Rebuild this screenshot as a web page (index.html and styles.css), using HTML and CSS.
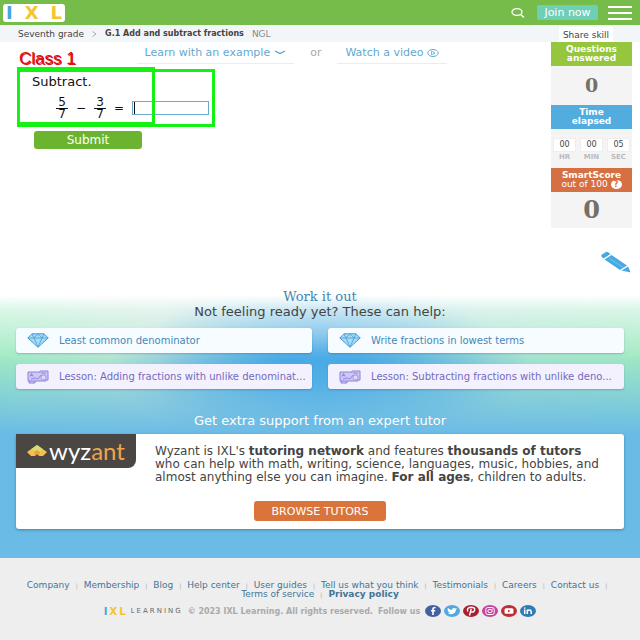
FILE: index.html
```html
<!DOCTYPE html>
<html lang="en">
<head>
<meta charset="utf-8">
<title>IXL | Add and subtract fractions</title>
<link rel="stylesheet" href="styles.css">
</head>
<body>
<svg class="defs" width="0" height="0" aria-hidden="true">
  <symbol id="gem" viewBox="0 0 22 15">
    <path d="M5 .8h12l4.2 4.2L11 14.2.8 5z" fill="#a4dcf8" stroke="#4a9bd2"/>
    <path d="M.8 5h20.4M5 .8 7 5l4-4.2L15 5l2-4.2M7 5l4 9.2L15 5" fill="none" stroke="#4a9bd2" stroke-width=".8"/>
  </symbol>
  <symbol id="lesson" viewBox="0 0 22 14">
    <path d="M1 2h12V1h8v9h-2v1H8v2H2v-2H1z" fill="#cdc7f5" stroke="#8e84dc"/>
    <path d="M3 6.500 4.500 3.500 6 6.500M3.500 5.500h2M4 9l4-1 3 1 3-4M14 3h5M2 11h6" fill="none" stroke="#8579d8" stroke-width=".8"/>
    <circle cx="16.500" cy="7.500" r="2.600" fill="#ddd9fa" stroke="#8e84dc" stroke-width=".8"/>
  </symbol>
</svg>

<header class="topbar">
  <a class="logo" href="#" aria-label="IXL"><span class="blue">I</span><span>X</span><span>L</span></a>
  <nav class="actions">
    <button class="plain" aria-label="Search"><svg width="14" height="10" viewBox="0 0 14 10"><ellipse cx="6" cy="4" rx="5" ry="3.300" fill="none" stroke="#fff" stroke-width="1.300"/><path d="m9.500 6.500 3.500 2.800" stroke="#fff" stroke-width="1.500"/></svg></button>
    <button class="join">Join now</button>
    <button class="plain" aria-label="Menu"><svg width="24" height="14" viewBox="0 0 24 14"><path d="M0 1h24M0 7h24M0 13h24" stroke="#fff" stroke-width="2"/></svg></button>
  </nav>
</header>

<nav class="crumbs">
  <a href="#">Seventh grade</a>
  <svg width="5" height="6" viewBox="0 0 5 6"><path d="m.5.500 3.500 2.500-3.500 2.500" fill="none" stroke="#aaa"/></svg>
  <strong>G.1 Add and subtract fractions</strong>
  <span class="code">NGL</span>
  <button class="share">Share skill</button>
</nav>

<main class="practice">
  <section class="work">
    <div class="helpers">
      <a href="#">Learn with an example <svg width="12" height="5" viewBox="0 0 12 5"><path d="m1 1 5 2.500L11 1" fill="none" stroke="#5b9fc8" stroke-width="1.200"/></svg></a>
      <span>or</span>
      <a href="#">Watch a video <svg width="12" height="8" viewBox="0 0 12 8"><ellipse cx="6" cy="4" rx="5.200" ry="3.500" fill="none" stroke="#5fa9d2"/><path d="M4.500 2.200v3.600L8 4z" fill="none" stroke="#5fa9d2" stroke-width=".8"/></svg></a>
    </div>
    <form class="question">
      <label class="prompt" for="answer">Subtract.</label>
      <div class="equation">
        <span class="fraction"><span>5</span><span>7</span></span>
        <span>−</span>
        <span class="fraction"><span>3</span><span>7</span></span>
        <span>=</span>
        <input id="answer" type="text">
      </div>
      <button class="submit" type="button">Submit</button>
      <div class="box box-wide"></div>
      <div class="box box-narrow"></div>
      <span class="tag tag-back" aria-hidden="true">Class 1</span>
      <span class="tag">Class 1</span>
    </form>
  </section>
  <aside class="stats">
    <h2 class="green">Questions<br>answered</h2>
    <p class="count">0</p>
    <h2 class="sky">Time<br>elapsed</h2>
    <div class="timer">
      <div><b>00</b><small>HR</small></div>
      <div><b>00</b><small>MIN</small></div>
      <div><b>05</b><small>SEC</small></div>
    </div>
    <h2 class="rust">SmartScore<br><span>out of 100 <i>?</i></span></h2>
    <p class="count score">0</p>
    <button class="plain pencil" aria-label="Scratchpad"><svg width="32" height="22" viewBox="0 0 32 22"><path d="m6 1-4 2.500q-1.500 1 0 2.500L3.500 7.500 10.500 3 8.500 1.500Q7 .300 6 1zM11.500 4 4.500 8.500 20 19l7-4.500zM28 15.500 21.500 19.600l8 1.600q1 .100.700-.900z" fill="#48a9e3"/><path d="m9 7 14 9.500" stroke="#7fc6ef" stroke-width=".8"/></svg></button>
  </aside>
</main>

<section class="support">
  <h2 class="title">Work it out</h2>
  <p class="lead">Not feeling ready yet? These can help:</p>
  <div class="cards">
    <a class="card" href="#"><svg width="22" height="15"><use href="#gem"/></svg><span>Least common denominator</span></a>
    <a class="card" href="#"><svg width="22" height="15"><use href="#gem"/></svg><span>Write fractions in lowest terms</span></a>
    <a class="card lesson" href="#"><svg width="22" height="14"><use href="#lesson"/></svg><span>Lesson: Adding fractions with unlike denominat...</span></a>
    <a class="card lesson" href="#"><svg width="22" height="14"><use href="#lesson"/></svg><span>Lesson: Subtracting fractions with unlike deno...</span></a>
  </div>
  <h3 class="expert">Get extra support from an expert tutor</h3>
  <div class="tutor">
    <div class="wyzant">
      <svg width="20" height="12" viewBox="0 0 20 12"><path d="M10 0 0 7l4 4 3.500 0L10 9l2.500 2H16l4-4z" fill="#f4c24b"/><path d="M10 0 4 4.300 10 8l6-3.700z" fill="#d6dc70"/><path d="m7 7 3-2 3 2-1 4-2-2-2 2z" fill="#ef9f3e"/></svg>
      <span>wyz<em>ant</em></span>
    </div>
    <div class="pitch">
      <p>Wyzant is IXL's <b>tutoring network</b> and features <b>thousands of tutors</b> who can help with math, writing, science, languages, music, hobbies, and almost anything else you can imagine. <b>For all ages</b>, children to adults.</p>
    </div>
    <button class="browse">BROWSE TUTORS</button>
  </div>
</section>

<footer class="footer">
  <ul>
    <li><a href="#">Company</a></li>
    <li><a href="#">Membership</a></li>
    <li><a href="#">Blog</a></li>
    <li><a href="#">Help center</a></li>
    <li><a href="#">User guides</a></li>
    <li><a href="#">Tell us what you think</a></li>
    <li><a href="#">Testimonials</a></li>
    <li><a href="#">Careers</a></li>
    <li><a href="#">Contact us</a></li>
    <li><a href="#">Terms of service</a></li>
    <li><a href="#"><b>Privacy policy</b></a></li>
  </ul>
  <div class="legal">
    <span class="mini"><span class="blue">I</span><span>X</span><span>L</span></span>
    <span class="learning">LEARNING</span>
    <span class="copy">© 2023 IXL Learning. All rights reserved.</span>
    <span class="follow">Follow us</span>
    <div class="social">
      <a href="#" aria-label="Facebook"><svg width="16" height="12" viewBox="0 0 16 12"><ellipse cx="8" cy="6" rx="8" ry="6" fill="#4460a0"/><path d="M8 10V4q0-1.500 2.500-1.500M6 5.700h4.200" fill="none" stroke="#fff" stroke-width="1.600"/></svg></a>
      <a href="#" aria-label="Twitter"><svg width="16" height="12" viewBox="0 0 16 12"><ellipse cx="8" cy="6" rx="8" ry="6" fill="#51a8e2"/><path d="M4 3q2 2 4 2 0-2 2-2 1 0 1.500.600L13 3.300l-1 1.500Q11.500 9 7 9.200q-2 0-3.300-.8 1.500 0 2.300-.6Q4 7 4 6 3 4.500 4 3z" fill="#fff"/></svg></a>
      <a href="#" aria-label="Pinterest"><svg width="16" height="12" viewBox="0 0 16 12"><ellipse cx="8" cy="6" rx="8" ry="6" fill="#a91f32"/><path d="M4.700 6.500Q3.500 2.300 8 2.200q4.200.1 3.700 2.600Q11 7.600 8 7M8.200 4 6.500 10.500" fill="none" stroke="#fff" stroke-width="1.400"/></svg></a>
      <a href="#" aria-label="Instagram"><svg width="16" height="12" viewBox="0 0 16 12"><ellipse cx="8" cy="6" rx="8" ry="6" fill="#c444a0"/><rect x="3.800" y="2.500" width="8.400" height="7" rx="2" fill="none" stroke="#fff"/><ellipse cx="8" cy="6" rx="2.200" ry="1.700" fill="none" stroke="#fff"/><circle cx="10.500" cy="4" r=".5" fill="#fff"/></svg></a>
      <a href="#" aria-label="YouTube"><svg width="16" height="12" viewBox="0 0 16 12"><ellipse cx="8" cy="6" rx="8" ry="6" fill="#bd2f36"/><rect x="3.500" y="3.200" width="9" height="5.600" rx="1.500" fill="#fff"/><path d="M7 4.700v2.600L9.500 6z" fill="#bd2f36"/></svg></a>
      <a href="#" aria-label="LinkedIn"><svg width="16" height="12" viewBox="0 0 16 12"><ellipse cx="8" cy="6" rx="8" ry="6" fill="#2f7bb5"/><path d="M4.700 4.600V9M4.700 2.500v1.200M7.300 9V4.600M7.300 6.500q.2-1.500 2-1.500t1.900 1.500V9" fill="none" stroke="#fff" stroke-width="1.500"/></svg></a>
    </div>
  </div>
</footer>
</body>
</html>
```

FILE: styles.css
```css
* { box-sizing: border-box; }

body {
  margin: 0;
  min-height: 100vh;
  display: flex;
  flex-direction: column;
  background: #fff;
  color: #444;
  font-family: "DejaVu Sans", Verdana, sans-serif;
  font-size: 12px;
}

h2, h3, p, ul { margin: 0; padding: 0; font-weight: normal; }
a { color: inherit; text-decoration: none; }
button { font-family: inherit; border: 0; padding: 0; }
svg { display: block; flex: none; }
.defs { position: absolute; }
.plain { background: none; }

.topbar {
  display: flex;
  justify-content: space-between;
  align-items: center;
  height: 25px;
  padding: 0 8px 0 3px;
  background: #76bc4b;
}
.logo {
  display: flex;
  justify-content: space-between;
  align-items: center;
  width: 62px;
  height: 18px;
  padding: 0 3px;
  border-radius: 3px;
  background: #fff;
  color: #f5c431;
  font-size: 18px;
  line-height: 18px;
  font-weight: bold;
}
.blue { color: #48a5e0; }
.actions { display: flex; align-items: center; gap: 12px; }
.join {
  width: 61px;
  height: 15px;
  margin-right: -2px;
  border-radius: 2px;
  background: #6fcfb4;
  color: #fff;
  font-size: 11px;
  line-height: 15px;
}

.crumbs {
  display: flex;
  align-items: center;
  gap: 8px;
  height: 17px;
  padding: 0 27px 0 18px;
  background: #f3f6f9;
  font-size: 9px;
}
.crumbs strong { font-size: 8px; }
.code { color: #888; }
.share {
  align-self: flex-end;
  width: 54px;
  height: 15px;
  margin-left: auto;
  background: #fff;
  color: #444;
  font-size: 9px;
}

.practice { display: flex; }
.work { flex: 1; }
.helpers {
  display: flex;
  justify-content: center;
  gap: 16px;
  padding-left: 33px;
  color: #5fa9d2;
  font-size: 11px;
  line-height: 21px;
}
.helpers a {
  display: flex;
  align-items: center;
  gap: 4px;
  padding: 0 8px;
  border-bottom: 1px solid #e3eef5;
}
.helpers span { color: #aaa; }

.question { position: relative; padding: 11px 18px 0 32px; color: #111; }
.prompt { display: block; font-size: 13px; line-height: 14px; }
.equation {
  display: flex;
  align-items: center;
  gap: 8px;
  height: 32px;
  margin: 3px 0 7px 24px;
}
.fraction { display: grid; width: 12px; text-align: center; line-height: 11px; }
.fraction span:first-child { border-bottom: 1px solid #111; }
#answer {
  width: 77px;
  height: 14px;
  border: 1px solid #6aa9d4;
  background: linear-gradient(#111, #111) 1px 0 / 1px 100% no-repeat #fff;
}
.submit {
  width: 108px;
  height: 18px;
  margin-left: 2px;
  border-radius: 3px;
  background: #6ab42f;
  color: #fff;
  font-size: 12px;
}
/* Detection boxes laid over the question */
.box { position: absolute; border: 3px solid #14f214; pointer-events: none; }
.box-wide { left: 17px; top: 5px; width: 198px; height: 58px; }
.box-narrow { left: 17px; top: 3px; width: 138px; height: 58px; }
.tag {
  position: absolute;
  left: 20px;
  top: -13px;
  color: #e01010;
  font: 17px/17px "Liberation Sans", sans-serif;
}
.tag-back { left: 19px; top: -14px; }

.stats {
  width: 81px;
  margin-right: 8px;
  text-align: center;
}
.stats h2 {
  display: grid;
  place-content: center;
  height: 24px;
  color: #fff;
  font-size: 9px;
  line-height: 9px;
  font-weight: bold;
}
.green { background: #95c63d; }
.sky { background: #52acde; }
.rust { background: #d66f41; }
.rust span { font-weight: normal; }
.rust i {
  display: inline-block;
  width: 11px;
  border-radius: 50%;
  background: #fff;
  color: #d66f41;
  font-size: 8px;
  font-style: normal;
  font-weight: bold;
}
.count {
  height: 39px;
  background: #f4f4f4;
  color: #756f65;
  font: bold 19px/39px "DejaVu Serif", serif;
}
.stats .score { height: 36px; font-size: 24px; line-height: 36px; }
.timer {
  display: grid;
  grid-template-columns: repeat(3, 1fr);
  gap: 4px;
  height: 39px;
  padding: 9px 2px 0;
  background: #f4f4f4;
}
.timer b {
  display: block;
  background: #fff;
  border: 1px solid #eee;
  font-size: 8px;
  font-weight: normal;
  line-height: 12px;
}
.timer small { display: block; color: #bbb; font-size: 7px; font-weight: bold; line-height: 10px; }
.pencil { display: block; margin: 23px 0 0 auto; }

.support {
  margin-top: 12px;
  padding: 5px 16px 29px;
  text-align: center;
  background:
    linear-gradient(#fff 10px, rgba(255, 255, 255, .6) 25px, rgba(255, 255, 255, 0) 75px),
    linear-gradient(transparent 70px, #6abbe6 150px),
    radial-gradient(ellipse 210px 75px at 50% 82px, #46a9e5 20%, transparent),
    linear-gradient(90deg, #a0ebc2, #bce3d5 25%, #82c5e4 50%, #a6e1cf 75%, #a0e9c2);
}
.title {
  color: #3f87b0;
  font: 13px/14px "DejaVu Serif", serif;
}
.lead { font-size: 13px; line-height: 16px; }
.cards {
  display: grid;
  grid-template-columns: 1fr 1fr;
  gap: 11px 16px;
  margin-top: 8px;
}
.card {
  display: flex;
  align-items: center;
  gap: 10px;
  height: 25px;
  padding: 0 4px 0 11px;
  border-radius: 3px;
  background: #f6fcff;
  box-shadow: 0 1px 2px rgba(0, 60, 90, .25);
  color: #4388bb;
  font-size: 10px;
  white-space: nowrap;
}
.lesson { background: #f3f1fd; color: #7469c2; }
.expert {
  margin: 23px 0 5px;
  color: #fff;
  font-size: 13px;
  line-height: 17px;
}
.tutor {
  display: grid;
  grid-template-columns: 120px 1fr;
  padding-bottom: 8px;
  border-radius: 3px;
  background: #fff;
  box-shadow: 0 1px 3px rgba(0, 50, 80, .4);
}
.wyzant {
  display: flex;
  align-items: center;
  justify-content: center;
  gap: 2px;
  height: 34px;
  border-radius: 0 0 8px 0;
  background: #494644;
  color: #fff;
  font: 24px/24px Lato, sans-serif;
}
.wyzant em { color: #efa54a; font-style: normal; }
.pitch { padding: 11px 20px 0 19px; text-align: left; line-height: 13px; }
.browse {
  grid-column: 1 / -1;
  justify-self: center;
  width: 132px;
  height: 20px;
  margin-top: 17px;
  border-radius: 3px;
  background: #da743b;
  color: #fff;
  font-size: 11px;
}

.footer {
  flex: 1;
  padding: 23px 12px 12px;
  background: #eee;
  color: #3f7597;
  font-size: 9px;
}
.footer ul {
  display: flex;
  flex-wrap: wrap;
  justify-content: center;
  list-style: none;
  line-height: 9px;
}
.footer li:not(:last-child)::after {
  content: "|";
  margin: 0 6px;
  color: #aaa;
  font-size: 6px;
}
.legal {
  display: flex;
  align-items: center;
  justify-content: center;
  gap: 5px;
  margin-top: 6px;
  color: #aaa;
  font-size: 8px;
  white-space: nowrap;
}
.mini { display: flex; gap: 2px; color: #f5c431; font-size: 10px; font-weight: bold; }
.learning { color: #666; font-size: 7px; letter-spacing: 2px; }
.copy, .follow { font-weight: bold; }
.social { display: flex; gap: 3px; }
```
